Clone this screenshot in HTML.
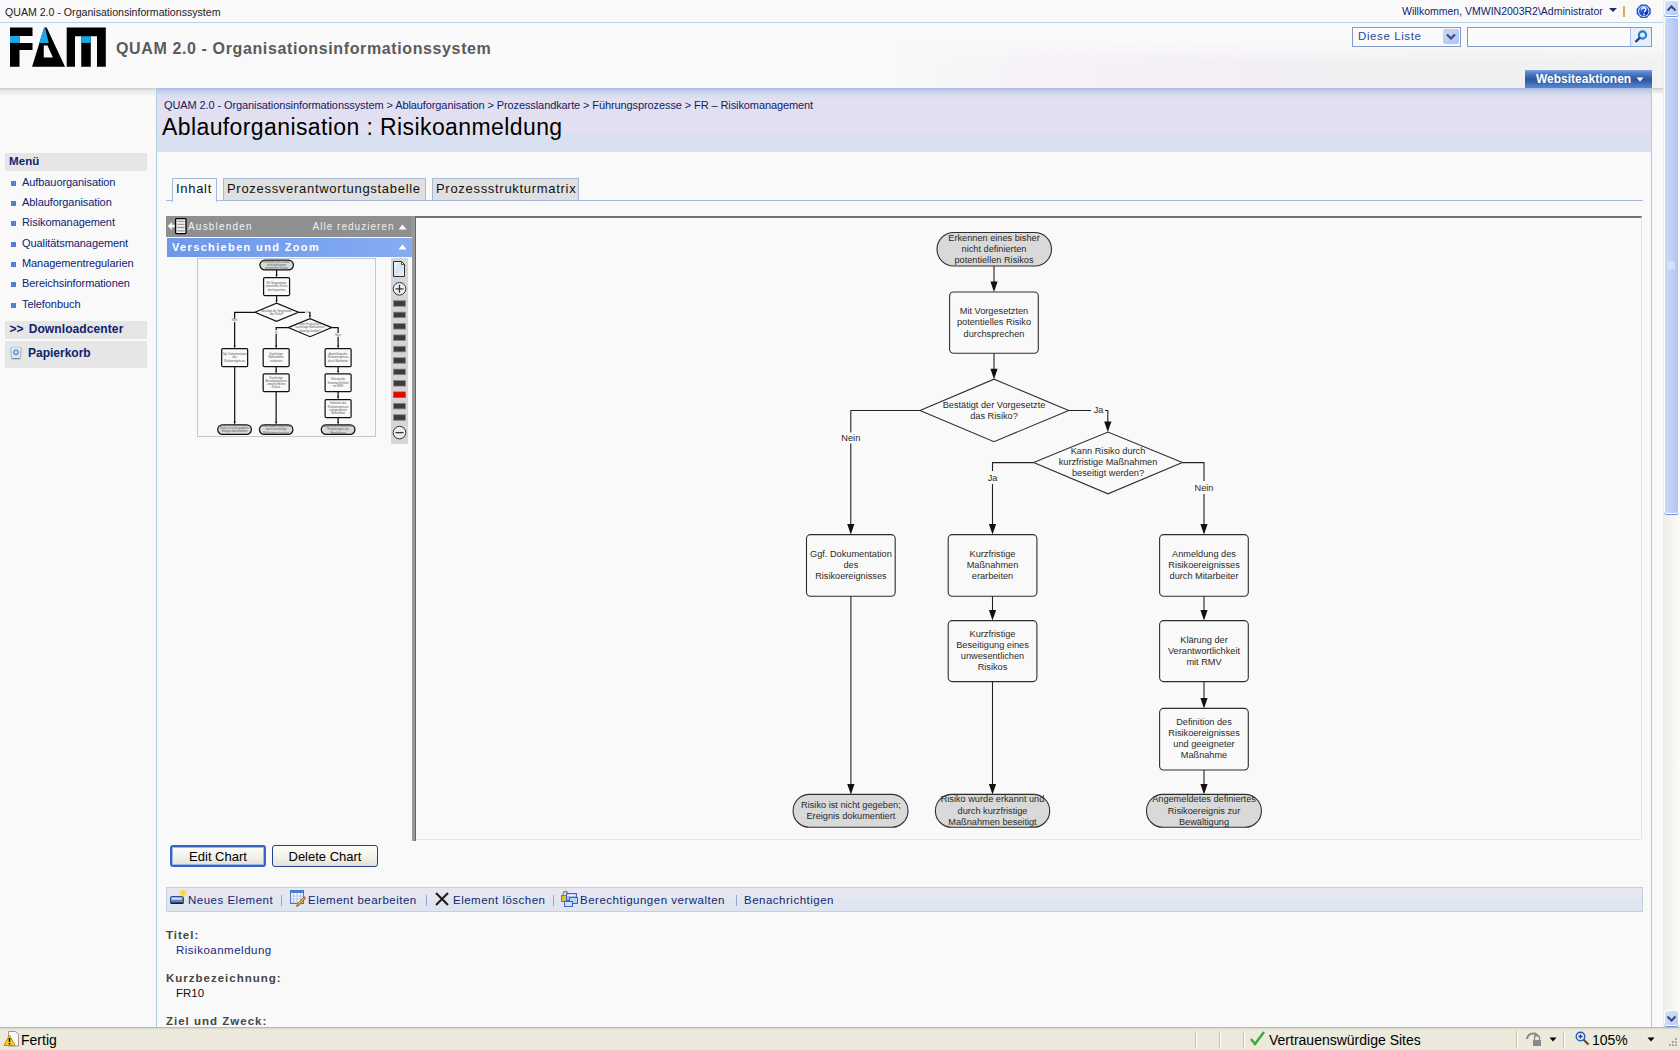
<!DOCTYPE html>
<html><head><meta charset="utf-8">
<style>
*{margin:0;padding:0;box-sizing:border-box}
html,body{width:1680px;height:1050px;overflow:hidden;background:#f9f9f9;font-family:"Liberation Sans",sans-serif}
.a{position:absolute;white-space:nowrap;line-height:1}
#topline{position:absolute;left:0;top:22px;width:1663px;height:1px;background:#b3d6e6}
#hdrshadow{position:absolute;left:0;top:88px;width:156px;height:7px;background:linear-gradient(#c9c9c9 0,#d6d6d6 1px,#e3e3e3 2px,#e8e8e8 3px,#efefef 4px,#f1f1f1 6.5px,#f9f9f9 7px)}
#titlearea{position:absolute;left:157px;top:88px;width:1494px;height:64px;background:linear-gradient(#a8b8e0 0px,#b6c2e4 1px,#c4cfe8 3px,#ccd5ea 5px,#cfd6ec 6px,#d8dff0 6px,#d8dff0 9.7px,#e2e0f0 9.7px,#e2e0f0 45px,#d9e0ef 45px,#d9e0ef 64px)}
#cborder{position:absolute;left:156px;top:88px;width:1px;height:939px;background:#a7d1e2}
#rborder{position:absolute;left:1651px;top:88px;width:1px;height:939px;background:#a7d1e2}
#hdrline2{position:absolute;left:1651px;top:88px;width:12px;height:1px;background:#e4e4e4}
#status{position:absolute;left:0;top:1027px;width:1680px;height:23px;background:linear-gradient(#a8a596 0,#d2d0c2 1px,#e6e4d6 2px,#eceadc 4px,#ebe9da 100%)}
#scroll{position:absolute;left:1663px;top:0;width:17px;height:1027px;background:linear-gradient(90deg,#eeede5,#f3f3ee 40%,#fbfbf7)}
.sbtn{position:absolute;left:1664px;width:15px;height:16px;border-radius:3px;border:1px solid #fff;background:linear-gradient(135deg,#d5e2fc,#b4ccf7);box-shadow:0 1px 0 #7096d8}
#thumb{position:absolute;left:1664px;top:17px;width:15px;height:497px;border-radius:3px;border:1px solid #fff;background:linear-gradient(90deg,#c9d8f9,#bfd0f6 50%,#adc5f5);box-shadow:0 1px 0 #6c8fd4}
.nav{color:#0c2272;font-size:11px;letter-spacing:-0.08px}
.bul{position:absolute;left:11px;width:5px;height:5px;background:#4f7fd0}
.tab{position:absolute;top:178px;height:22px;border:1px solid #a7b8dc;border-bottom:none;font-size:13px;letter-spacing:0.7px;color:#111;padding:3px 0 0 3px;line-height:13px}
.tb{position:absolute;top:894px;font-size:11.5px;letter-spacing:0.5px;color:#12276e}
.sep{position:absolute;top:895px;width:1px;height:11px;background:#8fa8d6}
.lbl{position:absolute;font-size:11.5px;font-weight:bold;letter-spacing:1px;color:#464646}
.val{position:absolute;font-size:11.5px;letter-spacing:0.5px}
.btn{position:absolute;top:845px;height:22px;border:1px solid #22418a;border-radius:3px;background:linear-gradient(#fdfdfa,#f1f0e8 60%,#e3e1d4);font-size:13px;color:#000;text-align:center;padding-top:3px}
</style></head><body>
<!-- top bar -->
<div class="a" style="left:5px;top:7px;font-size:10.6px;color:#222;letter-spacing:0px">QUAM 2.0 - Organisationsinformationssystem</div>
<div class="a" style="left:1402px;top:6px;font-size:10.5px;color:#14246a">Willkommen, VMWIN2003R2\Administrator</div>
<svg class="a" style="left:1608px;top:7px" width="10" height="6"><path d="M1 1h8L5 5z" fill="#1d2d6c"/></svg>
<div class="a" style="left:1623px;top:6px;width:2px;height:11px;background:#e0a850"></div>
<svg class="a" style="left:1635.8px;top:3.8px" width="15.4" height="14.5" viewBox="0 0 17 16"><defs><linearGradient id="hg" x1="0" y1="0" x2="1" y2="1"><stop offset="0" stop-color="#5a9cff"/><stop offset=".5" stop-color="#1a50e0"/><stop offset="1" stop-color="#001a90"/></linearGradient></defs><path d="M5.3 0.6h6.4l4.6 4.6v5.6l-4.6 4.6H5.3L0.7 10.8V5.2z" fill="#2a58c8"/><circle cx="8.5" cy="8" r="6.2" fill="#f0f4ff"/><circle cx="8.5" cy="8" r="5.3" fill="url(#hg)"/><path d="M6.3 6.2c0-1.4 1-2.1 2.3-2.1s2.3.8 2.3 2c0 1.3-1.5 1.7-1.8 3" fill="none" stroke="#fff" stroke-width="1.5"/><circle cx="8.9" cy="11.5" r="0.95" fill="#fff"/></svg>
<div id="topline"></div>
<div class="a" style="left:900px;top:44px;width:763px;height:44px;background:linear-gradient(90deg,rgba(246,242,247,0),rgba(245,240,247,.9) 20%,rgba(243,239,245,1) 45%,rgba(241,240,241,1) 80%,rgba(242,242,242,1));-webkit-mask-image:linear-gradient(rgba(0,0,0,0),#000 40%,#000)"></div>
<!-- logo -->
<svg class="a" style="left:0;top:0" width="110" height="70">
<path d="M10 27.5H32.5V36H19.5V42.9H32.5V50H19.5V66.7H10Z" fill="#000"/>
<rect x="10" y="36" width="9.5" height="6.9" fill="#1ba8e8"/>
<path d="M44.2 27.5H46.7L65 66.7H32.1Z M43.75 45.4V57.5H52.9L47.5 45.4Z" fill="#000" fill-rule="evenodd"/>
<path d="M44.2 27.5H45L48.75 42.9H39.2Z" fill="#1ba8e8"/>
<path d="M66.7 27.5H105.8V66.7H97V36.25H90.8V66.7H81.25V36.25H75V66.7H66.7Z" fill="#000"/>
<rect x="81.25" y="36.25" width="9.55" height="6.65" fill="#1ba8e8"/>
</svg>
<div class="a" style="left:116px;top:41px;font-size:16px;font-weight:bold;color:#5b5b5b;letter-spacing:0.62px">QUAM 2.0 - Organisationsinformationssystem</div>
<!-- search -->
<div class="a" style="left:1352px;top:27px;width:109px;height:20px;border:1px solid #7d9bc5;background:#fafafa"></div>
<div class="a" style="left:1358px;top:31px;font-size:11.5px;color:#2b4c9a;letter-spacing:0.6px">Diese Liste</div>
<div class="a" style="left:1443px;top:29px;width:16px;height:15px;border-radius:2px;background:linear-gradient(135deg,#c6d6f8,#aec6f4)"></div>
<svg class="a" style="left:1445px;top:32px" width="12" height="9"><path d="M2 2.5l4 4 4-4" fill="none" stroke="#3a4a7c" stroke-width="2.2"/></svg>
<div class="a" style="left:1467px;top:27px;width:185px;height:20px;border:1px solid #7d9bc5;background:#fafafa"></div>
<div class="a" style="left:1630px;top:28px;width:21px;height:18px;border-left:1px solid #a7c5ef;background:#e8eef8"></div>
<svg class="a" style="left:1632px;top:29px" width="17" height="16"><circle cx="10.5" cy="6" r="3.6" fill="none" stroke="#2a7ad8" stroke-width="2.2"/><path d="M8 8.5L3.5 13" stroke="#1c3c98" stroke-width="2.4"/></svg>
<!-- site actions -->
<div class="a" style="left:1525px;top:70px;width:127px;height:18px;background:linear-gradient(#86a8e4 0,#5f8ad2 2px,#4472bc 5px,#2f5a9c 9px,#3562a8 12px,#4a7ac6 15px,#5886d0 18px)"></div>
<div class="a" style="left:1536px;top:73px;font-size:12px;font-weight:bold;color:#fff">Websiteaktionen</div>
<svg class="a" style="left:1636px;top:77px" width="9" height="5"><path d="M0.5 0.5h7l-3.5 4z" fill="#fff"/></svg>
<div id="hdrshadow"></div>
<div class="a" style="left:1652px;top:88px;width:11px;height:6px;background:linear-gradient(#c9c9c9 0,#e3e3e3 2px,#f1f1f1 5px,#f9f9f9)"></div>
<div id="titlearea"></div>
<div id="cborder"></div>
<div id="rborder"></div>
<!-- breadcrumb & title -->
<div class="a" style="left:164px;top:100px;font-size:11px;color:#111c66;letter-spacing:-0.1px">QUAM 2.0 - Organisationsinformationssystem &gt; Ablauforganisation &gt; Prozesslandkarte &gt; Führungsprozesse &gt; FR – Risikomanagement</div>
<div class="a" style="left:162px;top:116px;font-size:23px;color:#000;letter-spacing:0.4px">Ablauforganisation : Risikoanmeldung</div>
<!-- left nav -->
<div class="a" style="left:5px;top:153px;width:142px;height:18px;background:#e6e6e6"></div>
<div class="a" style="left:9px;top:156px;font-size:11.5px;font-weight:bold;color:#0c2272;letter-spacing:0.1px">Menü</div>
<div class="bul" style="top:181px"></div><div class="a nav" style="left:22px;top:177px">Aufbauorganisation</div>
<div class="bul" style="top:201px"></div><div class="a nav" style="left:22px;top:197px">Ablauforganisation</div>
<div class="bul" style="top:221px"></div><div class="a nav" style="left:22px;top:217px">Risikomanagement</div>
<div class="bul" style="top:242px"></div><div class="a nav" style="left:22px;top:238px">Qualitätsmanagement</div>
<div class="bul" style="top:262px"></div><div class="a nav" style="left:22px;top:258px">Managementregularien</div>
<div class="bul" style="top:282px"></div><div class="a nav" style="left:22px;top:278px">Bereichsinformationen</div>
<div class="bul" style="top:303px"></div><div class="a nav" style="left:22px;top:299px">Telefonbuch</div>
<div class="a" style="left:5px;top:321px;width:142px;height:18px;background:#e6e6e6"></div>
<div class="a" style="left:9.5px;top:323px;font-size:12px;font-weight:bold;color:#0c2272;letter-spacing:0.1px;word-spacing:1.5px">&gt;&gt; Downloadcenter</div>
<div class="a" style="left:5px;top:341px;width:142px;height:27px;background:#e6e6e6"></div>
<svg class="a" style="left:9px;top:346px" width="15" height="14"><path d="M1.5 1.5h11l-1.3 11.5h-8.4z" fill="#dfe8f0" stroke="#9ab0c0" stroke-width="0.9"/><path d="M1.5 1.5h11" stroke="#c8d4dc" stroke-width="1.5"/><circle cx="7" cy="6.3" r="2.2" fill="none" stroke="#5a90d8" stroke-width="1.4"/><path d="M3.5 12.5h7" stroke="#7a8a98" stroke-width="1"/></svg>
<div class="a" style="left:28px;top:347px;font-size:12px;font-weight:bold;color:#0c2272">Papierkorb</div>
<!-- tabs -->
<div class="a" style="left:166px;top:200px;width:1477px;height:1px;background:#a7b8dc"></div>
<div class="tab" style="left:172px;width:45px;height:24px;background:#f9f9f9;padding-left:3px">Inhalt</div>
<div class="tab" style="left:223px;width:203px;background:#e0e0e0">Prozessverantwortungstabelle</div>
<div class="tab" style="left:432px;width:147px;background:#e0e0e0">Prozessstrukturmatrix</div>
<!-- left panel -->
<div class="a" style="left:166px;top:216px;width:248px;height:21px;background:#8f8f8f"></div>
<svg class="a" style="left:166px;top:216px" width="22" height="20"><path d="M1.7 10L6 5.9V8.8H8.7V11.2H6V14.1Z" fill="#f8f8f8"/><rect x="9.6" y="2.6" width="10.4" height="15" rx="0.8" fill="#f6f2f6" stroke="#000" stroke-width="1.3"/><path d="M11.3 5.3h7.2M11.3 8.4h7.2M11.3 11.5h7.2M11.3 14.8h7.2" stroke="#999" stroke-width="1.3"/></svg>
<div class="a" style="left:188px;top:222px;font-size:10px;color:#f0f4f4;letter-spacing:1.2px">Ausblenden</div>
<div class="a" style="left:312.5px;top:222px;font-size:10px;color:#eeeeee;letter-spacing:1.02px">Alle reduzieren</div>
<svg class="a" style="left:398px;top:224px" width="9" height="6"><path d="M0.5 5.5h8L4.5 0.5z" fill="#fff"/></svg>
<div class="a" style="left:167px;top:238px;width:245px;height:19px;background:linear-gradient(90deg,#6f97ea,#7aa3ef 60%,#86adf2)"></div>
<div class="a" style="left:172px;top:242px;font-size:11px;font-weight:bold;color:#fff;letter-spacing:1.35px">Verschieben und Zoom</div>
<svg class="a" style="left:398px;top:244px" width="9" height="6"><path d="M0.5 5.5h8L4.5 0.5z" fill="#fff"/></svg>
<div class="a" style="left:412px;top:216px;width:3px;height:625px;background:#999"></div>
<div class="a" style="left:415px;top:216px;width:1px;height:625px;background:#6e6658"></div>
<!-- thumbnail -->
<div class="a" style="left:197px;top:258px;width:179px;height:179px;border:1px solid #c8c8c8;background:#f9f9f9"></div>
<div class="a" style="left:391px;top:258px;width:17px;height:186px;background:#d6d6d6"></div>
<svg class="a" style="left:391px;top:258px" width="17" height="186">
<defs><linearGradient id="pg" x1="0" y1="0" x2="1" y2="1"><stop offset="0" stop-color="#f4f8fc"/><stop offset=".5" stop-color="#d4e2f0"/><stop offset="1" stop-color="#eef4fa"/></linearGradient></defs><path d="M2.5 3.5h8l3 3v12h-11z" fill="url(#pg)" stroke="#333" stroke-width="1"/><path d="M10.5 3.5v3h3" fill="none" stroke="#333" stroke-width="0.8"/>
<circle cx="8.5" cy="30.8" r="6.3" fill="#e8eef8" stroke="#333" stroke-width="1"/><path d="M4.5 30.8h8M8.5 26.8v8" stroke="#333" stroke-width="1.3"/>
<g fill="#3c3c3c" stroke="#8a8a8a" stroke-width="0.8"><rect x="2.5" y="42.7" width="12" height="5.6"/><rect x="2.5" y="54.1" width="12" height="5.6"/><rect x="2.5" y="65.5" width="12" height="5.6"/><rect x="2.5" y="76.9" width="12" height="5.6"/><rect x="2.5" y="88.3" width="12" height="5.6"/><rect x="2.5" y="99.7" width="12" height="5.6"/><rect x="2.5" y="111.1" width="12" height="5.6"/><rect x="2.5" y="122.5" width="12" height="5.6"/><rect x="2.5" y="145.3" width="12" height="5.6"/><rect x="2.5" y="156.7" width="12" height="5.6"/></g>
<rect x="2.5" y="133.9" width="12" height="5.6" fill="#ee0000" stroke="#c04040" stroke-width="0.6"/>
<circle cx="8.5" cy="174.6" r="6.3" fill="#e8eef8" stroke="#333" stroke-width="1"/><path d="M4.5 174.6h8" stroke="#333" stroke-width="1.3"/>
</svg>
<!-- chart frame -->
<div class="a" style="left:416px;top:216px;width:1226px;height:624px;border-top:2px solid #7a7264;border-right:1px solid #ece4da;border-bottom:1px solid #eee2d2;background:#f9f9f9"></div>
<!-- buttons -->
<div class="btn" style="left:170px;width:96px;border:2px solid #3a62c0;box-shadow:inset 0 0 0 1px #9cb8f0;padding-top:2px">Edit Chart</div>
<div class="btn" style="left:272px;width:106px">Delete Chart</div>
<!-- toolbar -->
<div class="a" style="left:166px;top:887px;width:1477px;height:25px;border:1px solid #bcd4de;background:linear-gradient(#e8e7f1,#e6e6f0 45%,#e0e6f0 55%,#e0e6f0)"></div>
<svg class="a" style="left:170px;top:889px" width="17" height="17"><rect x="0.5" y="7.5" width="13" height="6.5" rx="1" fill="#5a86c8" stroke="#2a4a88"/><rect x="1.5" y="8.5" width="10" height="2.2" fill="#d0e0f8"/><rect x="0.5" y="13.5" width="13" height="1.5" fill="#222"/><circle cx="13" cy="4" r="2.6" fill="#ffe680"/><path d="M13 0v8M9 4h8M10.2 1.2l5.6 5.6M15.8 1.2l-5.6 5.6" stroke="#f8d020" stroke-width="1"/></svg>
<div class="tb" style="left:188px">Neues Element</div>
<div class="sep" style="left:281px"></div>
<svg class="a" style="left:289px;top:890px" width="17" height="17"><rect x="1.5" y="0.5" width="13" height="13" fill="#f4f7fc" stroke="#4a70b8"/><rect x="1.5" y="0.5" width="13" height="2.5" fill="#4a80d8"/><path d="M4.5 3v10.5M8 3v10.5M11.5 3v10.5M1.5 6h13M1.5 9h13M1.5 12h13" stroke="#a8bcdc" stroke-width="0.8"/><path d="M15.2 6.8l-6.5 7-1.2 2.6 2.6-1.2 6.5-7z" fill="#f0c030" stroke="#6a4a20" stroke-width="0.8"/><path d="M14 6l2 2" stroke="#c86070" stroke-width="1.4"/></svg>
<div class="tb" style="left:308px">Element bearbeiten</div>
<div class="sep" style="left:426px"></div>
<svg class="a" style="left:434px;top:891px" width="16" height="16"><path d="M2 2l12 12M14 2L2 14" stroke="#222" stroke-width="2.2"/></svg>
<div class="tb" style="left:453px">Element löschen</div>
<div class="sep" style="left:553px"></div>
<svg class="a" style="left:560px;top:890px" width="19" height="18"><path d="M3.2 5.5V3.8a2.3 2.3 0 014.6 0v1.7" fill="none" stroke="#9a8a70" stroke-width="1.3"/><rect x="1.5" y="5.5" width="7.5" height="6" fill="#e8b840" stroke="#a07828"/><rect x="6.5" y="3.5" width="10" height="7" fill="#9ec0f0" stroke="#3a6ac0"/><rect x="7.5" y="4.5" width="8" height="1.5" fill="#e8f0ff"/><rect x="9.5" y="7.5" width="8" height="6" fill="#b8d2f8" stroke="#3a6ac0"/><rect x="4.5" y="11.5" width="8" height="5" fill="#cfe0fa" stroke="#3a6ac0"/></svg>
<div class="tb" style="left:580px">Berechtigungen verwalten</div>
<div class="sep" style="left:736px"></div>
<div class="tb" style="left:744px">Benachrichtigen</div>
<!-- fields -->
<div class="lbl" style="left:166px;top:929px">Titel:</div>
<div class="val" style="left:176px;top:944px;color:#17287a">Risikoanmeldung</div>
<div class="lbl" style="left:166px;top:972px">Kurzbezeichnung:</div>
<div class="val" style="left:176px;top:987px;color:#111;letter-spacing:0">FR10</div>
<div class="lbl" style="left:166px;top:1015px">Ziel und Zweck:</div>
<!-- scrollbar -->
<div id="scroll"></div>
<div class="sbtn" style="top:0px"></div>
<svg class="a" style="left:1666px;top:4px" width="11" height="8"><path d="M1.5 6.5l4-4 4 4" fill="none" stroke="#3d4a78" stroke-width="2"/></svg>
<div id="thumb"></div>
<svg class="a" style="left:1667px;top:261px" width="9" height="8"><path d="M1 1h7M1 3h7M1 5h7M1 7h7" stroke="#eef3ff" stroke-width="1"/></svg>
<div class="sbtn" style="top:1010px"></div>
<svg class="a" style="left:1666px;top:1015px" width="11" height="8"><path d="M1.5 1.5l4 4 4-4" fill="none" stroke="#3d4a78" stroke-width="2"/></svg>
<!-- status bar -->
<div id="status"></div>
<svg class="a" style="left:3px;top:1031px" width="16" height="16"><path d="M5.5 0.5h7l3 3v11.5h-10z" fill="#fafafa" stroke="#999"/><path d="M1 14.5L6.5 4l5.5 10.5z" fill="#f8d030" stroke="#c09010"/><path d="M6.5 7v4M6.5 12v1.5" stroke="#000" stroke-width="1.5"/></svg>
<div class="a" style="left:21px;top:1033px;font-size:14px;color:#000">Fertig</div>
<div class="a" style="left:1195px;top:1031px;width:1px;height:17px;background:#c4c1b0;box-shadow:1px 0 0 #fff"></div>
<div class="a" style="left:1219px;top:1031px;width:1px;height:17px;background:#c4c1b0;box-shadow:1px 0 0 #fff"></div>
<div class="a" style="left:1243px;top:1031px;width:1px;height:17px;background:#c4c1b0;box-shadow:1px 0 0 #fff"></div>
<svg class="a" style="left:1249px;top:1030px" width="17" height="17"><path d="M2 9l4 5L15 2" fill="none" stroke="#3aaa40" stroke-width="2.4"/></svg>
<div class="a" style="left:1269px;top:1033px;font-size:14px;color:#000">Vertrauenswürdige Sites</div>
<div class="a" style="left:1516px;top:1031px;width:1px;height:17px;background:#c4c1b0;box-shadow:1px 0 0 #fff"></div>
<svg class="a" style="left:1525px;top:1031px" width="18" height="16"><path d="M2 8a6 6 0 0110-4" fill="none" stroke="#8a8a8a" stroke-width="2"/><path d="M10 1l3 3-4 1z" fill="#8a8a8a"/><rect x="8" y="9" width="8" height="6" fill="#8a8a8a"/><path d="M9.5 9V7a2.5 2.5 0 015 0v2" fill="none" stroke="#8a8a8a" stroke-width="1.3"/></svg>
<svg class="a" style="left:1549px;top:1037px" width="9" height="5"><path d="M0.5 0.5h7l-3.5 4z" fill="#000"/></svg>
<div class="a" style="left:1563px;top:1031px;width:1px;height:17px;background:#c4c1b0;box-shadow:1px 0 0 #fff"></div>
<svg class="a" style="left:1575px;top:1031px" width="15" height="15"><circle cx="5.5" cy="5.5" r="4.3" fill="#dfeefc" stroke="#2a5aa8" stroke-width="1.4"/><path d="M3.5 5.5h4M5.5 3.5v4" stroke="#1a3a9a" stroke-width="1.3"/><path d="M8.5 8.5l5 5" stroke="#6a4a30" stroke-width="2.2"/></svg>
<div class="a" style="left:1592px;top:1033px;font-size:14px;color:#000">105%</div>
<svg class="a" style="left:1647px;top:1037px" width="9" height="5"><path d="M0.5 0.5h7l-3.5 4z" fill="#000"/></svg>
<svg class="a" style="left:1666px;top:1037px" width="12" height="12"><g fill="#b8a0a8"><rect x="9" y="1" width="2" height="2"/><rect x="6" y="4" width="2" height="2"/><rect x="9" y="4" width="2" height="2"/><rect x="3" y="7" width="2" height="2"/><rect x="6" y="7" width="2" height="2"/><rect x="9" y="7" width="2" height="2"/></g></svg>
<!-- FLOWCHART -->
<svg class="a" id="fc" style="left:0;top:0" width="1680" height="1050"><style>#fc text{font-family:"Liberation Sans",sans-serif;font-size:9.2px;fill:#2a2a2a;text-anchor:middle}#fc .t{fill:#d9d9d9;stroke:#2e2e2e;stroke-width:1.1}#fc .b{fill:#f9f9f9;stroke:#2e2e2e;stroke-width:1.1}#fc .l{fill:none;stroke:#222;stroke-width:1.1}#fc .ah{fill:#111}</style><style>#fc .th text{fill:#555;font-size:9.2px}#fc .th .t,#fc .th .b,#fc .th .l{stroke:#111;stroke-width:4.2}#fc .th .ah{fill:#111}</style><g id="main"><rect x="937.0" y="232.5" width="114.5" height="33.5" rx="16.8" class="t"/>
<text x="994.0" y="241.3">Erkennen eines bisher</text>
<text x="994.0" y="252.3">nicht definierten</text>
<text x="994.0" y="263.0">potentiellen Risikos</text>
<path d="M994.0 266.0V284.0" class="l"/><path d="M990.4 281.5L997.6 281.5L994.0 292.0Z" class="ah"/>
<rect x="949.6" y="292.0" width="88.7" height="61.3" rx="4" class="b"/>
<text x="994.0" y="314.2">Mit Vorgesetzten</text>
<text x="994.0" y="325.2">potentielles Risiko</text>
<text x="994.0" y="336.5">durchsprechen</text>
<path d="M994.0 353.3V371.2" class="l"/><path d="M990.4 368.7L997.6 368.7L994.0 379.2Z" class="ah"/>
<path d="M920 410.5L994 379.2L1068.7 410.5L994 441.7Z" class="b"/>
<text x="994.0" y="407.9">Bestätigt der Vorgesetzte</text>
<text x="994.0" y="418.9">das Risiko?</text>
<path d="M920 410.5H850.8V432.5" class="l"/><path d="M850.8 443.5V526.6" class="l"/>
<path d="M847.2 524.1H854.4L850.8 534.6Z" class="ah"/>
<text x="850.8" y="441.2">Nein</text>
<path d="M1068.7 410.5H1091M1105 410.5H1107.8V424" class="l"/><path d="M1104.2 421.5H1111.4L1107.8 432Z" class="ah"/>
<text x="1098.5" y="413.0">Ja</text>
<path d="M1033.6 462.6L1108 432L1182.4 462.6L1108 493.8Z" class="b"/>
<text x="1108.0" y="454.4">Kann Risiko durch</text>
<text x="1108.0" y="465.4">kurzfristige Maßnahmen</text>
<text x="1108.0" y="476.4">beseitigt werden?</text>
<path d="M1033.6 462.6H992.5V471M992.5 484V526.6" class="l"/><path d="M988.9 524.1H996.1L992.5 534.6Z" class="ah"/>
<text x="992.5" y="481.1">Ja</text>
<path d="M1182.4 462.6H1204V481M1204 494V526.6" class="l"/><path d="M1200.4 524.1H1207.6L1204 534.6Z" class="ah"/>
<text x="1204.0" y="491.3">Nein</text>
<rect x="806.5" y="534.6" width="88.7" height="61.6" rx="4" class="b"/>
<text x="850.9" y="556.9">Ggf. Dokumentation</text>
<text x="850.9" y="568.2">des</text>
<text x="850.9" y="579.2">Risikoereignisses</text>
<rect x="948.2" y="534.6" width="88.7" height="61.6" rx="4" class="b"/>
<text x="992.5" y="556.9">Kurzfristige</text>
<text x="992.5" y="568.2">Maßnahmen</text>
<text x="992.5" y="579.2">erarbeiten</text>
<rect x="1159.6" y="534.6" width="88.7" height="61.6" rx="4" class="b"/>
<text x="1204.0" y="556.9">Anmeldung des</text>
<text x="1204.0" y="568.2">Risikoereignisses</text>
<text x="1204.0" y="579.2">durch Mitarbeiter</text>
<path d="M992.5 596.2V612.6" class="l"/><path d="M988.9 610.1L996.1 610.1L992.5 620.6Z" class="ah"/>
<rect x="948.2" y="620.6" width="88.7" height="61.0" rx="4" class="b"/>
<text x="992.5" y="637.1">Kurzfristige</text>
<text x="992.5" y="648.4">Beseitigung eines</text>
<text x="992.5" y="659.4">unwesentlichen</text>
<text x="992.5" y="670.4">Risikos</text>
<path d="M1204.0 596.2V612.6" class="l"/><path d="M1200.4 610.1L1207.6 610.1L1204.0 620.6Z" class="ah"/>
<rect x="1159.6" y="620.6" width="88.7" height="61.0" rx="4" class="b"/>
<text x="1204.0" y="642.9">Klärung der</text>
<text x="1204.0" y="653.9">Verantwortlichkeit</text>
<text x="1204.0" y="664.9">mit RMV</text>
<path d="M1204.0 681.6V700.4" class="l"/><path d="M1200.4 697.9L1207.6 697.9L1204.0 708.4Z" class="ah"/>
<rect x="1159.6" y="708.4" width="88.7" height="61.6" rx="4" class="b"/>
<text x="1204.0" y="725.2">Definition des</text>
<text x="1204.0" y="736.4">Risikoereignisses</text>
<text x="1204.0" y="747.4">und geeigneter</text>
<text x="1204.0" y="758.4">Maßnahme</text>
<path d="M1204.0 770.0V786.4" class="l"/><path d="M1200.4 783.9L1207.6 783.9L1204.0 794.4Z" class="ah"/>
<path d="M850.9 596.2V786.4" class="l"/><path d="M847.2 783.9L854.5 783.9L850.9 794.4Z" class="ah"/>
<path d="M992.5 681.6V786.4" class="l"/><path d="M988.9 783.9L996.1 783.9L992.5 794.4Z" class="ah"/>
<rect x="793.1" y="794.4" width="114.9" height="32.9" rx="16.4" class="t"/>
<text x="850.9" y="808.4">Risiko ist nicht gegeben;</text>
<text x="850.9" y="819.1">Ereignis dokumentiert</text>
<rect x="935.4" y="794.4" width="114.3" height="32.9" rx="16.4" class="t"/>
<text x="992.5" y="802.4">Risiko wurde erkannt und</text>
<text x="992.5" y="813.9">durch kurzfristige</text>
<text x="992.5" y="825.1">Maßnahmen beseitigt</text>
<rect x="1146.5" y="794.4" width="114.9" height="32.9" rx="16.4" class="t"/>
<text x="1204.0" y="802.4">Angemeldetes definiertes</text>
<text x="1204.0" y="813.9">Risikoereignis zur</text>
<text x="1204.0" y="825.1">Bewältigung</text></g><g transform="translate(-14.65,192.02) scale(0.293)" class="th"><rect x="937.0" y="232.5" width="114.5" height="33.5" rx="16.8" class="t"/>
<text x="994.0" y="241.3">Erkennen eines bisher</text>
<text x="994.0" y="252.3">nicht definierten</text>
<text x="994.0" y="263.0">potentiellen Risikos</text>
<path d="M994.0 266.0V284.0" class="l"/><path d="M990.4 281.5L997.6 281.5L994.0 292.0Z" class="ah"/>
<rect x="949.6" y="292.0" width="88.7" height="61.3" rx="4" class="b"/>
<text x="994.0" y="314.2">Mit Vorgesetzten</text>
<text x="994.0" y="325.2">potentielles Risiko</text>
<text x="994.0" y="336.5">durchsprechen</text>
<path d="M994.0 353.3V371.2" class="l"/><path d="M990.4 368.7L997.6 368.7L994.0 379.2Z" class="ah"/>
<path d="M920 410.5L994 379.2L1068.7 410.5L994 441.7Z" class="b"/>
<text x="994.0" y="407.9">Bestätigt der Vorgesetzte</text>
<text x="994.0" y="418.9">das Risiko?</text>
<path d="M920 410.5H850.8V432.5" class="l"/><path d="M850.8 443.5V526.6" class="l"/>
<path d="M847.2 524.1H854.4L850.8 534.6Z" class="ah"/>
<text x="850.8" y="441.2">Nein</text>
<path d="M1068.7 410.5H1091M1105 410.5H1107.8V424" class="l"/><path d="M1104.2 421.5H1111.4L1107.8 432Z" class="ah"/>
<text x="1098.5" y="413.0">Ja</text>
<path d="M1033.6 462.6L1108 432L1182.4 462.6L1108 493.8Z" class="b"/>
<text x="1108.0" y="454.4">Kann Risiko durch</text>
<text x="1108.0" y="465.4">kurzfristige Maßnahmen</text>
<text x="1108.0" y="476.4">beseitigt werden?</text>
<path d="M1033.6 462.6H992.5V471M992.5 484V526.6" class="l"/><path d="M988.9 524.1H996.1L992.5 534.6Z" class="ah"/>
<text x="992.5" y="481.1">Ja</text>
<path d="M1182.4 462.6H1204V481M1204 494V526.6" class="l"/><path d="M1200.4 524.1H1207.6L1204 534.6Z" class="ah"/>
<text x="1204.0" y="491.3">Nein</text>
<rect x="806.5" y="534.6" width="88.7" height="61.6" rx="4" class="b"/>
<text x="850.9" y="556.9">Ggf. Dokumentation</text>
<text x="850.9" y="568.2">des</text>
<text x="850.9" y="579.2">Risikoereignisses</text>
<rect x="948.2" y="534.6" width="88.7" height="61.6" rx="4" class="b"/>
<text x="992.5" y="556.9">Kurzfristige</text>
<text x="992.5" y="568.2">Maßnahmen</text>
<text x="992.5" y="579.2">erarbeiten</text>
<rect x="1159.6" y="534.6" width="88.7" height="61.6" rx="4" class="b"/>
<text x="1204.0" y="556.9">Anmeldung des</text>
<text x="1204.0" y="568.2">Risikoereignisses</text>
<text x="1204.0" y="579.2">durch Mitarbeiter</text>
<path d="M992.5 596.2V612.6" class="l"/><path d="M988.9 610.1L996.1 610.1L992.5 620.6Z" class="ah"/>
<rect x="948.2" y="620.6" width="88.7" height="61.0" rx="4" class="b"/>
<text x="992.5" y="637.1">Kurzfristige</text>
<text x="992.5" y="648.4">Beseitigung eines</text>
<text x="992.5" y="659.4">unwesentlichen</text>
<text x="992.5" y="670.4">Risikos</text>
<path d="M1204.0 596.2V612.6" class="l"/><path d="M1200.4 610.1L1207.6 610.1L1204.0 620.6Z" class="ah"/>
<rect x="1159.6" y="620.6" width="88.7" height="61.0" rx="4" class="b"/>
<text x="1204.0" y="642.9">Klärung der</text>
<text x="1204.0" y="653.9">Verantwortlichkeit</text>
<text x="1204.0" y="664.9">mit RMV</text>
<path d="M1204.0 681.6V700.4" class="l"/><path d="M1200.4 697.9L1207.6 697.9L1204.0 708.4Z" class="ah"/>
<rect x="1159.6" y="708.4" width="88.7" height="61.6" rx="4" class="b"/>
<text x="1204.0" y="725.2">Definition des</text>
<text x="1204.0" y="736.4">Risikoereignisses</text>
<text x="1204.0" y="747.4">und geeigneter</text>
<text x="1204.0" y="758.4">Maßnahme</text>
<path d="M1204.0 770.0V786.4" class="l"/><path d="M1200.4 783.9L1207.6 783.9L1204.0 794.4Z" class="ah"/>
<path d="M850.9 596.2V786.4" class="l"/><path d="M847.2 783.9L854.5 783.9L850.9 794.4Z" class="ah"/>
<path d="M992.5 681.6V786.4" class="l"/><path d="M988.9 783.9L996.1 783.9L992.5 794.4Z" class="ah"/>
<rect x="793.1" y="794.4" width="114.9" height="32.9" rx="16.4" class="t"/>
<text x="850.9" y="808.4">Risiko ist nicht gegeben;</text>
<text x="850.9" y="819.1">Ereignis dokumentiert</text>
<rect x="935.4" y="794.4" width="114.3" height="32.9" rx="16.4" class="t"/>
<text x="992.5" y="802.4">Risiko wurde erkannt und</text>
<text x="992.5" y="813.9">durch kurzfristige</text>
<text x="992.5" y="825.1">Maßnahmen beseitigt</text>
<rect x="1146.5" y="794.4" width="114.9" height="32.9" rx="16.4" class="t"/>
<text x="1204.0" y="802.4">Angemeldetes definiertes</text>
<text x="1204.0" y="813.9">Risikoereignis zur</text>
<text x="1204.0" y="825.1">Bewältigung</text></g></svg>
</body></html>
